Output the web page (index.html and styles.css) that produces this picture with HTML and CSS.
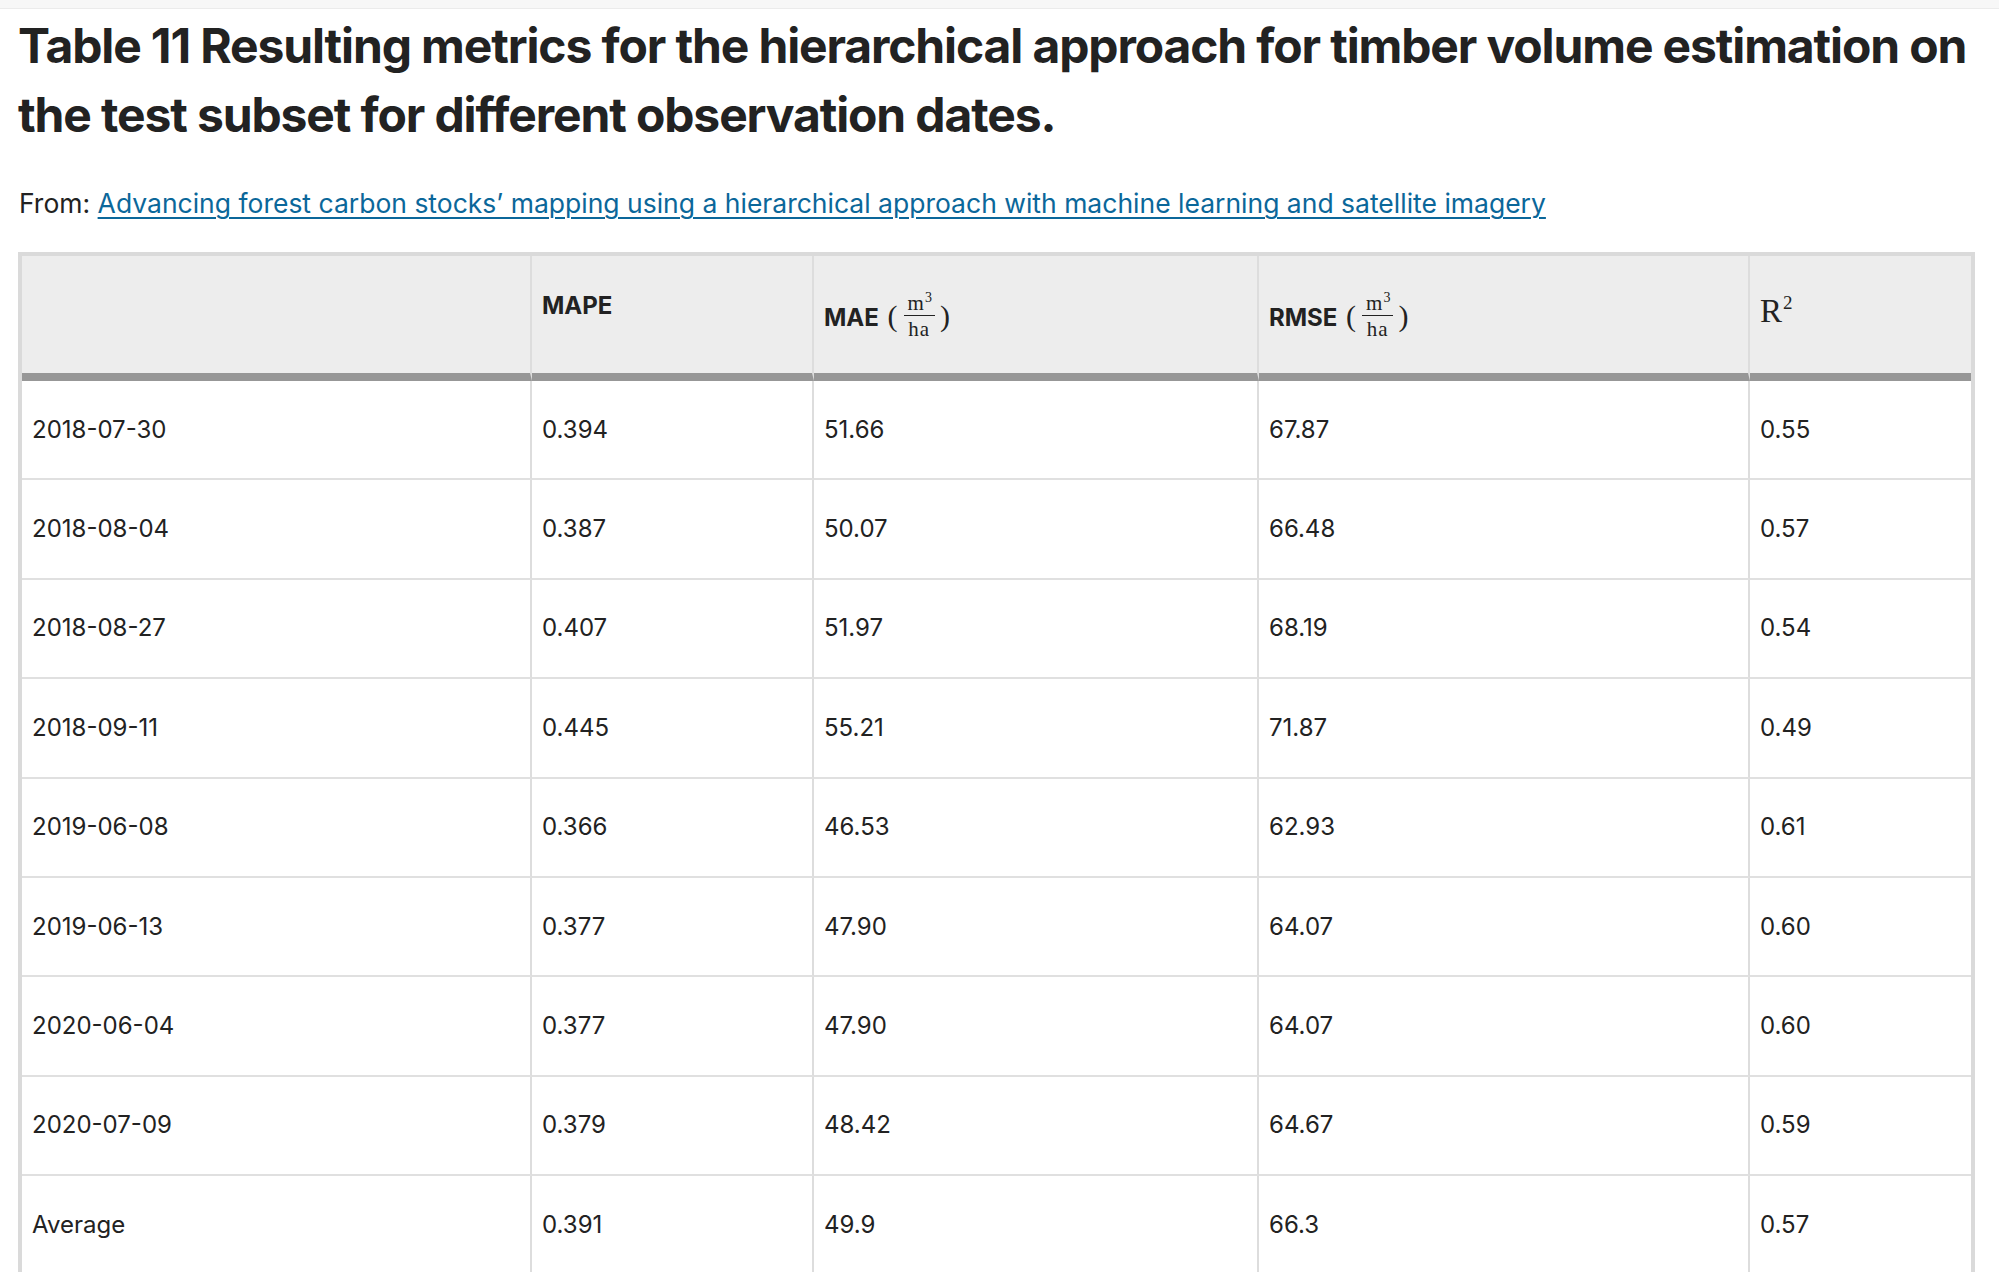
FILE: index.html
```html
<!DOCTYPE html>
<html lang="en">
<head>
<meta charset="utf-8">
<title>Table 11</title>
<link rel="stylesheet" href="styles.css">
</head>
<body>
<div class="topband"></div>
<main class="page">
  <h1 class="title">Table 11 Resulting metrics for the hierarchical approach for timber volume estimation on the test subset for different observation dates.</h1>
  <p class="source">From: <a href="#" class="source-link">Advancing forest carbon stocks’ mapping using a hierarchical approach with machine learning and satellite imagery</a></p>
  <table class="data">
    <colgroup>
      <col class="c1"><col class="c2"><col class="c3"><col class="c4"><col class="c5">
    </colgroup>
    <thead>
      <tr>
        <th></th>
        <th>MAPE</th>
        <th>MAE <span class="unit"><span class="paren">(</span><span class="frac"><span class="num">m<sup>3</sup></span><span class="den">ha</span></span><span class="paren">)</span></span></th>
        <th>RMSE <span class="unit"><span class="paren">(</span><span class="frac"><span class="num">m<sup>3</sup></span><span class="den">ha</span></span><span class="paren">)</span></span></th>
        <th><span class="math">R<sup>2</sup></span></th>
      </tr>
    </thead>
    <tbody>
      <tr><td>2018-07-30</td><td>0.394</td><td>51.66</td><td>67.87</td><td>0.55</td></tr>
      <tr><td>2018-08-04</td><td>0.387</td><td>50.07</td><td>66.48</td><td>0.57</td></tr>
      <tr><td>2018-08-27</td><td>0.407</td><td>51.97</td><td>68.19</td><td>0.54</td></tr>
      <tr><td>2018-09-11</td><td>0.445</td><td>55.21</td><td>71.87</td><td>0.49</td></tr>
      <tr><td>2019-06-08</td><td>0.366</td><td>46.53</td><td>62.93</td><td>0.61</td></tr>
      <tr><td>2019-06-13</td><td>0.377</td><td>47.90</td><td>64.07</td><td>0.60</td></tr>
      <tr><td>2020-06-04</td><td>0.377</td><td>47.90</td><td>64.07</td><td>0.60</td></tr>
      <tr><td>2020-07-09</td><td>0.379</td><td>48.42</td><td>64.67</td><td>0.59</td></tr>
      <tr><td>Average</td><td>0.391</td><td>49.9</td><td>66.3</td><td>0.57</td></tr>
    </tbody>
  </table>
</main>
</body>
</html>
```

FILE: styles.css
```css
html {
  overflow: hidden;
}
body {
  margin: 0;
  background: #ffffff;
  color: #222222;
  font-family: Inter, "Noto Sans", "Liberation Sans", sans-serif;
}
.topband {
  height: 8px;
  background: #f7f7f7;
  border-bottom: 1px solid #ebebeb;
}
.page {
  padding: 0 24px 0 18px;
}
.title {
  margin: 2px 0 0 0;
  font-size: 48px;
  line-height: 69px;
  font-weight: 700;
  letter-spacing: -0.0235em;
  color: #222222;
}
.source {
  margin: 36px 0 0 1px;
  font-size: 26.5px;
  line-height: 36px;
  color: #222222;
}
.source-link {
  color: #0b679a;
  text-decoration: underline;
  text-decoration-thickness: 2px;
  text-underline-offset: 4px;
}
.data {
  margin-top: 31px;
  width: 1957px;
  table-layout: fixed;
  border-collapse: separate;
  border-spacing: 0;
  border: 4px solid #dadada;
  border-bottom: 0;
  font-size: 24px;
}
.c1 { width: 510px; }
.c2 { width: 282px; }
.c3 { width: 445px; }
.c4 { width: 491px; }
.c5 { width: 221px; }
.data th,
.data td {
  padding: 0 12px 0 10px;
  border-right: 2px solid #dddddd;
  text-align: left;
  color: #222222;
}
.data th:last-child,
.data td:last-child {
  border-right: 0;
}
.data thead tr {
  height: 125px;
}
.data th {
  background: #ededed;
  vertical-align: top;
  padding-top: 32px;
  font-weight: 700;
  line-height: 36px;
  border-bottom: 8px solid #979797;
}
.data tbody tr {
  height: 99.4px;
}
.data td {
  vertical-align: middle;
  border-bottom: 2px solid #e0e0e0;
  line-height: 32px;
}
.unit {
  display: inline-flex;
  align-items: center;
  height: 42px;
  padding-top: 7px;
  font-family: "Liberation Serif", "DejaVu Serif", serif;
  font-weight: 400;
  margin-left: 3px;
}
.paren {
  font-size: 30px;
  line-height: 34px;
}
.frac {
  display: inline-flex;
  flex-direction: column;
  align-items: center;
  margin: 0 5px 0 6px;
  font-size: 21px;
  line-height: 19px;
  letter-spacing: 1px;
}
.num {
  padding: 0 3px 2px 4px;
  border-bottom: 1px solid #222222;
}
.num sup {
  font-size: 14px;
  vertical-align: 8px;
  line-height: 0;
  letter-spacing: 0;
}
.den {
  padding-top: 4px;
}
.math {
  font-family: "Liberation Serif", "DejaVu Serif", serif;
  font-weight: 400;
  font-size: 33px;
  line-height: 46px;
}
.math sup {
  font-size: 19px;
  vertical-align: 13px;
  line-height: 0;
  margin-left: 1px;
}
```
